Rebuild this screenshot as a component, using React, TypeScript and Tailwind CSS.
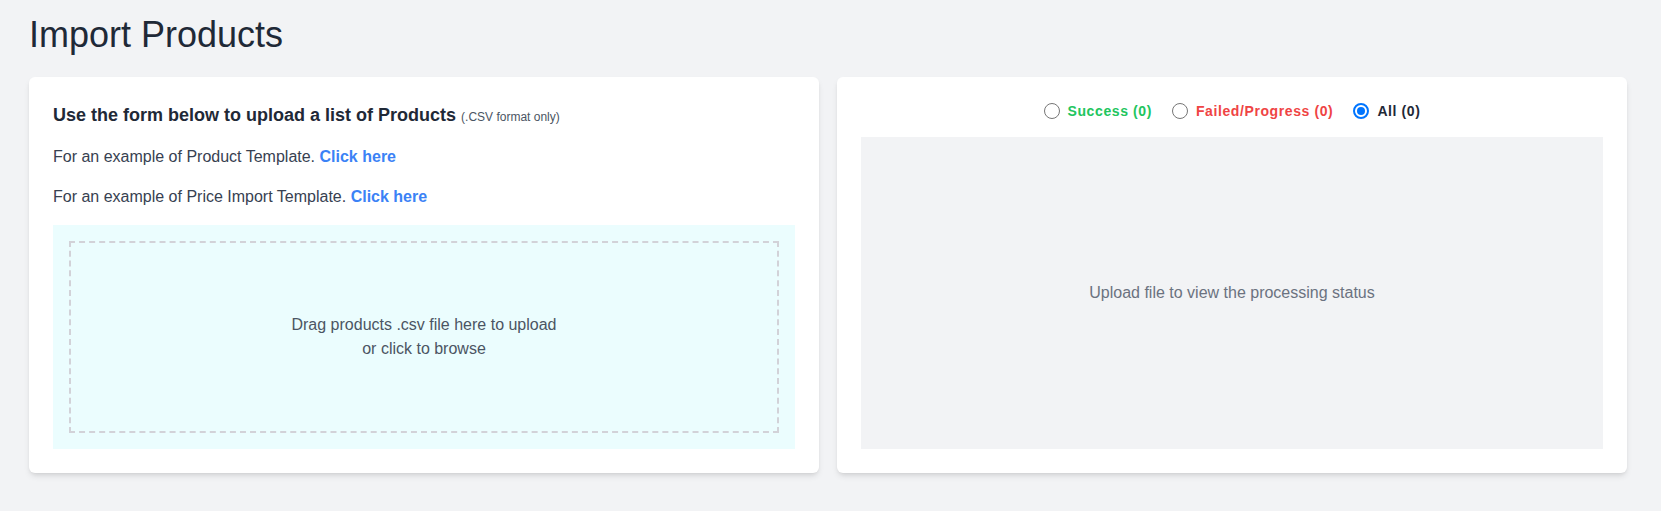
import React, { useState } from 'react';

type Filter = 'success' | 'failed' | 'all';

function Radio({ checked }: { checked: boolean }) {
    if (checked) {
        return (
            <span className="flex h-4 w-4 items-center justify-center rounded-full border-2 border-[#0075ff] bg-white">
                <span className="h-2 w-2 rounded-full bg-[#0075ff]" />
            </span>
        );
    }
    return <span className="h-4 w-4 rounded-full border border-[#767676] bg-white" />;
}

function UploadCard() {
    return (
        <div className="flex flex-col rounded-md bg-white p-6 shadow-md">
            <h2 className="text-lg font-bold text-[#1f2937]">
                Use the form below to upload a list of Products{' '}
                <span className="text-xs font-normal text-[#4b5563]">(.CSV format only)</span>
            </h2>
            <p className="mt-4 text-base text-[#374151]">
                For an example of Product Template.{' '}
                <a href="#" className="font-bold text-[#3b82f6]">
                    Click here
                </a>
            </p>
            <p className="mt-4 text-base text-[#374151]">
                For an example of Price Import Template.{' '}
                <a href="#" className="font-bold text-[#3b82f6]">
                    Click here
                </a>
            </p>
            <div className="mt-4 bg-[#ebfdfe] p-4">
                <div className="flex h-[192px] cursor-pointer flex-col items-center justify-center border-2 border-dashed border-[#d2d2d8] text-center text-base text-[#4b5563]">
                    <span>Drag products .csv file here to upload</span>
                    <span>or click to browse</span>
                </div>
            </div>
        </div>
    );
}

function StatusCard() {
    const [filter, setFilter] = useState<Filter>('all');
    const options: { key: Filter; label: string; color: string }[] = [
        { key: 'success', label: 'Success (0)', color: 'text-[#22c55e]' },
        { key: 'failed', label: 'Failed/Progress (0)', color: 'text-[#ef4444]' },
        { key: 'all', label: 'All (0)', color: 'text-[#1f2937]' },
    ];

    return (
        <div className="flex flex-col rounded-md bg-white p-6 shadow-md">
            <div className="mb-4 flex h-5 items-center justify-center gap-5">
                {options.map((o) => (
                    <label
                        key={o.key}
                        className="flex cursor-pointer items-center gap-2"
                        onClick={() => setFilter(o.key)}
                    >
                        <Radio checked={filter === o.key} />
                        <span className={`text-sm font-bold tracking-[0.6px] ${o.color}`}>{o.label}</span>
                    </label>
                ))}
            </div>
            <div className="flex flex-1 items-center justify-center bg-[#f2f3f5]">
                <span className="text-base text-[#6b7280]">Upload file to view the processing status</span>
            </div>
        </div>
    );
}

export default function App() {
    return (
        <div className="min-h-[511px] bg-[#f2f3f5] pl-[29px] pr-[34px] pt-[15px] font-['Liberation_Sans',Arial,sans-serif]">
            <h1 className="mb-[22px] text-4xl text-[#1f2937]">Import Products</h1>
            <div className="grid grid-cols-2 gap-[18px]">
                <UploadCard />
                <StatusCard />
            </div>
        </div>
    );
}
